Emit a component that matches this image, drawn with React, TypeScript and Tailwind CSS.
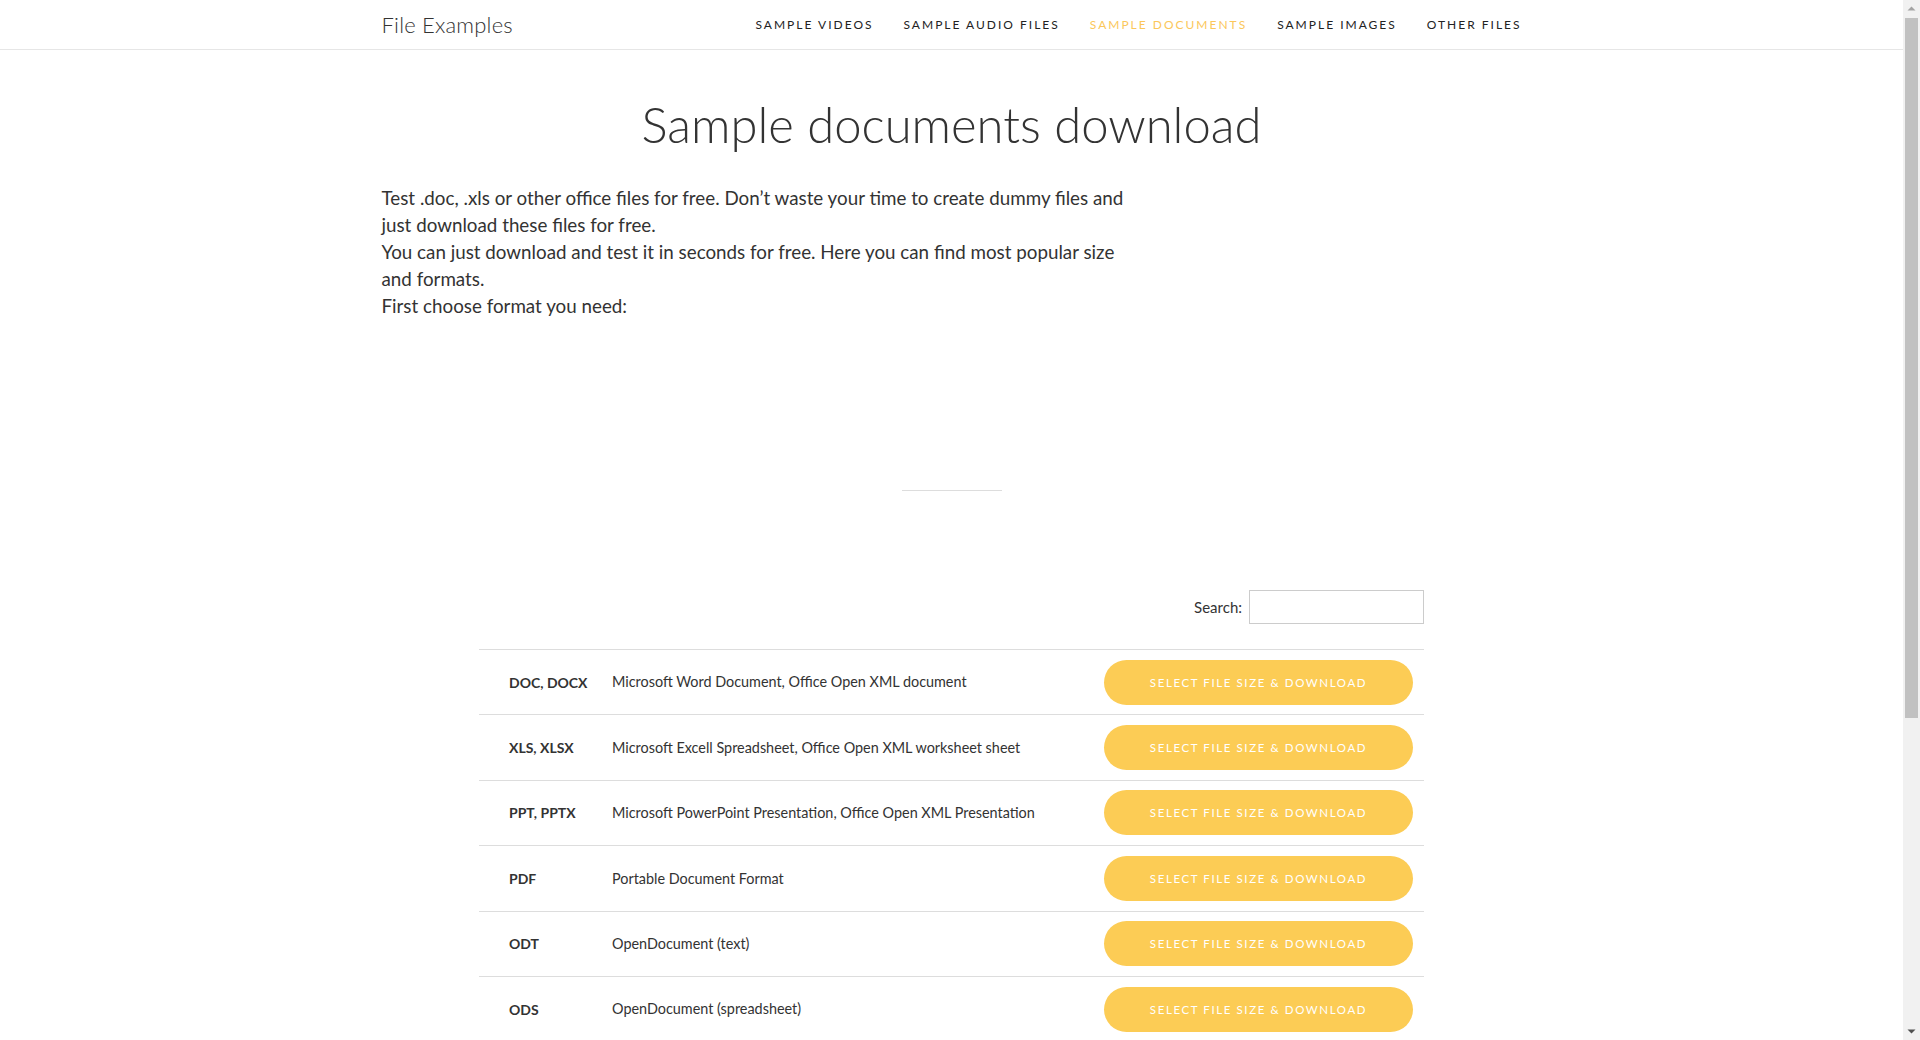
import React from "react";

const rows: [string, string][] = [
  ["DOC, DOCX", "Microsoft Word Document, Office Open XML document"],
  ["XLS, XLSX", "Microsoft Excell Spreadsheet, Office Open XML worksheet sheet"],
  ["PPT, PPTX", "Microsoft PowerPoint Presentation, Office Open XML Presentation"],
  ["PDF", "Portable Document Format"],
  ["ODT", "OpenDocument (text)"],
  ["ODS", "OpenDocument (spreadsheet)"],
  ["ODP", "OpenDocument (presentation)"],
  ["RTF", "Rich Text Format"],
];

const nav = [
  { label: "Sample Videos", active: false },
  { label: "Sample Audio Files", active: false },
  { label: "Sample Documents", active: true },
  { label: "Sample Images", active: false },
  { label: "Other Files", active: false },
];

function Scrollbar() {
  return (
    <div className="w-[17px] h-full bg-[#f1f1f1] flex flex-col items-center shrink-0">
      <div className="h-[17px] w-full flex items-center justify-center">
        <svg width="9" height="5" viewBox="0 0 9 5">
          <path d="M0.5 4.5 L4.5 0.5 L8.5 4.5 Z" fill="#a3a3a3" />
        </svg>
      </div>
      <div className="w-[13px] h-[700px] mt-[1px] bg-[#c1c1c1]" />
      <div className="flex-1" />
      <div className="h-[17px] w-full flex items-center justify-center">
        <svg width="9" height="5" viewBox="0 0 9 5">
          <path d="M0.5 0.5 L8.5 0.5 L4.5 4.5 Z" fill="#505050" />
        </svg>
      </div>
    </div>
  );
}

export default function App() {
  return (
    <div className="h-screen overflow-hidden flex bg-white text-[#333]" style={{ fontFamily: "Lato, 'Open Sans', sans-serif" }}>
      <div className="flex-1 h-full overflow-hidden">
        <header className="h-[50px] border-b border-[#e6e6e6]">
          <div className="w-[1140px] mx-auto h-full flex items-center justify-between">
            <div className="text-[22px] font-light text-[#333] tracking-[0.2px]">File Examples</div>
            <nav className="flex items-center gap-[30px]">
              {nav.map((n) => (
                <a
                  key={n.label}
                  className={`uppercase text-[12px] tracking-[2px] ${n.active ? "text-[#fbc75a]" : "text-[#222]"}`}
                >
                  {n.label}
                </a>
              ))}
            </nav>
          </div>
        </header>

        <main className="w-[1140px] mx-auto">
          <h1 className="mt-[44px] h-[60px] leading-[60px] text-center text-[49px] font-light text-[#333]">
            Sample documents download
          </h1>
          <div className="mt-[30px] text-[18.8px] leading-[27px] text-[#333]">
            <div className="whitespace-nowrap">Test .doc, .xls or other office files for free. Don’t waste your time to create dummy files and</div>
            <div className="whitespace-nowrap">just download these files for free.</div>
            <div className="whitespace-nowrap">You can just download and test it in seconds for free. Here you can find most popular size</div>
            <div className="whitespace-nowrap">and formats.</div>
            <div className="whitespace-nowrap">First choose format you need:</div>
          </div>

          <div className="mt-[170px] h-[2px] flex justify-center items-center">
            <div className="w-[100px] h-px bg-[#dddddd]" />
          </div>

          <div className="w-[945px] mx-auto mt-[99px]">
            <div className="flex justify-end items-center gap-[7px] h-[34px]">
              <label className="text-[15px] text-[#333]">Search:</label>
              <input className="w-[175px] h-[34px] border border-[#cccccc] outline-none px-2" />
            </div>
            <div className="mt-[25px]">
              {rows.map(([fmt, desc]) => (
                <div key={fmt} className="h-[65.4px] border-t border-[#dddddd] flex items-center pl-[30px] pr-[11px]">
                  <div className="w-[103px] font-bold text-[14px] text-[#333]">{fmt}</div>
                  <div className="flex-1 text-[14.4px] text-[#333]">{desc}</div>
                  <button className="w-[309px] h-[45px] rounded-full bg-[#fccc55] text-white uppercase text-[11.5px] font-normal tracking-[1.6px]">
                    Select File Size &amp; Download
                  </button>
                </div>
              ))}
            </div>
            <div className="border-t border-[#dddddd] pt-4 text-[14px] text-[#555]">Showing 1 to 8 of 8 entries</div>
          </div>

          <div className="h-[220px]" />
        </main>
        <footer className="border-t border-[#e6e6e6] py-6 text-center text-[13px] text-[#777]">
          © File Examples. All rights reserved.
        </footer>
      </div>
      <Scrollbar />
    </div>
  );
}
